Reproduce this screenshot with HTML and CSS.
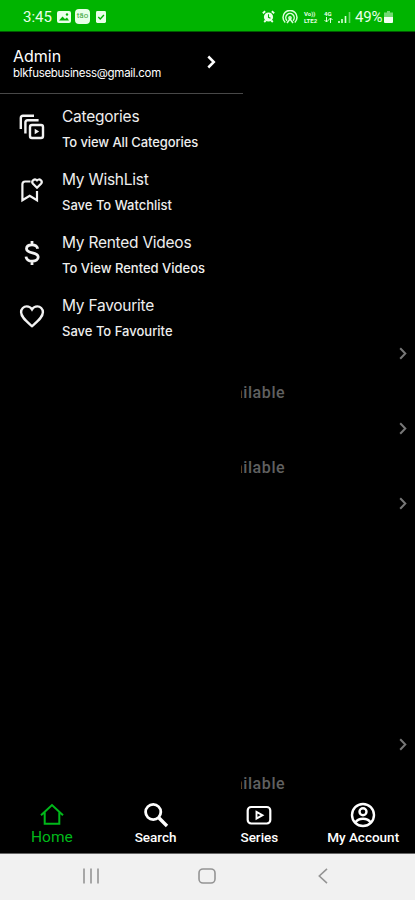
FILE: index.html
```
<!DOCTYPE html>
<html lang="en">
<head>
    <meta charset="UTF-8">
    <meta name="viewport" content="width=device-width, initial-scale=1.0">
    <title>Home</title>
    <link rel="stylesheet" href="styles.css">
</head>
<body>
    <div class="phone">
        <!-- status bar -->
        <header class="status">
            <div class="status-left">
                <span class="clock">3:45</span>
                <svg width="14" height="12" viewBox="0 0 14 12"><rect width="14" height="12" rx="2" fill="#e9ffe9"/><path d="M2 9.5l3.5-4 2.5 2.5 2-1.5 2 3z" fill="#00b400"/><circle cx="10" cy="3.5" r="1.2" fill="#00b400"/></svg>
                <span class="app-badge">tão</span>
                <svg width="10" height="12" viewBox="0 0 11 13"><rect width="11" height="13" rx="1.5" fill="#e9ffe9"/><path d="M2.5 6.5l2.2 2.2 4-4.4" fill="none" stroke="#00b400" stroke-width="1.5"/></svg>
            </div>
            <div class="status-right">
                <svg width="13" height="13" viewBox="0 0 13 13"><circle cx="6.5" cy="7" r="4.6" fill="#e9ffe9"/><path d="M.8 3.2l2.4-2M12.2 3.2l-2.4-2M2.2 12l1.5-1.5M10.8 12l-1.5-1.5" stroke="#e9ffe9" stroke-width="1.8"/><path d="M6.5 4.3v3l2 1" fill="none" stroke="#00b400" stroke-width="1.1"/></svg>
                <svg class="hotspot" width="16" height="14" viewBox="0 0 16 14" fill="none" stroke="#d9ffd9" stroke-width="1.5"><path d="M3.2 12.5A7 7 0 1 1 12.8 12.5M5 10.7A4.2 4.2 0 1 1 11 10.7"/><circle cx="8" cy="7.8" r="1.1"/><path d="M8 9l-3 4M8 9l3 4"/></svg>
                <span class="tiny"><span>Vo))</span><span>LTE2</span></span>
                <span class="tiny net"><span>4G</span><svg width="9" height="6" viewBox="0 0 9 6" fill="none" stroke="#d9ffd9"><path d="M2.5 0v5M.5 3l2 2 2-2M6.5 6V1M4.5 3l2-2 2 2"/></svg></span>
                <svg class="signal" width="13" height="12" viewBox="0 0 13 12"><path d="M1 12v-2M4 12V8M7.5 12V5" stroke="#d9ffd9" stroke-width="1.6"/><path d="M11.5 12V1" stroke="#6bd66b" stroke-width="1.6"/></svg>
                <span class="percent">49%</span>
                <svg width="9" height="12" viewBox="0 0 9 12"><path d="M3 0h3v1.5h3V6H0V1.5h3z" fill="#72d972"/><path d="M0 6h9v5q0 1-1 1H1q-1 0-1-1z" fill="#f3fff3"/></svg>
            </div>
        </header>

        <main class="screen">
            <!-- dimmed home page -->
            <section class="home">
                <div class="section-head"><svg width="8" height="13" viewBox="0 0 8 13"><path d="M1.2 1.2L6.3 6.5l-5.1 5.3"/></svg></div>
                <p class="empty">ailable</p>
                <div class="section-head"><svg width="8" height="13" viewBox="0 0 8 13"><path d="M1.2 1.2L6.3 6.5l-5.1 5.3"/></svg></div>
                <p class="empty">ailable</p>
                <div class="section-head"><svg width="8" height="13" viewBox="0 0 8 13"><path d="M1.2 1.2L6.3 6.5l-5.1 5.3"/></svg></div>
                <div class="section-head last"><svg width="8" height="13" viewBox="0 0 8 13"><path d="M1.2 1.2L6.3 6.5l-5.1 5.3"/></svg></div>
                <p class="empty">ailable</p>
            </section>

            <!-- drawer -->
            <aside class="drawer">
                <div class="profile">
                    <div>
                        <div class="name">Admin</div>
                        <div class="email">blkfusebusiness@gmail.com</div>
                    </div>
                    <svg class="profile-arrow" width="9" height="14" viewBox="0 0 9 14"><path d="M1.3 1.5L6.8 7l-5.5 5.5" fill="none" stroke="#fff" stroke-width="2.5"/></svg>
                </div>
                <nav class="menu">
                    <a class="item">
                        <svg width="26" height="26" viewBox="0 0 26 26" fill="none" stroke="#f2f2f2" stroke-width="2.4"><path d="M1.8 15V4q0-2.2 2.2-2.2h11M6.4 19.5V8.5q0-2.2 2.2-2.2h11"/><rect x="11" y="11" width="13" height="13" rx="2"/><path d="M15.7 14.7l4.5 2.8-4.5 2.8z" fill="#f2f2f2" stroke="none"/></svg>
                        <span class="label"><b>Categories</b><small class="plain">To view All Categories</small></span>
                    </a>
                    <a class="item">
                        <svg width="26" height="26" viewBox="0 0 26 26" fill="none" stroke="#f2f2f2" stroke-width="2.2"><path d="M11.5 4.5H6.2Q3.4 4.5 3.4 7.3v16l7.3-4.6 7.3 4.6V14"/><path d="M18 10.8l-4-4a2.3 2.3 0 0 1 4-3.4 2.3 2.3 0 0 1 4 3.4z"/></svg>
                        <span class="label"><b>My WishList</b><small>Save To Watchlist</small></span>
                    </a>
                    <a class="item">
                        <svg width="26" height="26" viewBox="0 0 26 26" fill="none" stroke="#f2f2f2" stroke-width="2.8"><path d="M13 1v4M13 21v4M18.7 8.8C18.2 6 16 4.8 13 4.8c-3.2 0-5.5 1.5-5.5 4 0 5.5 11.7 2.8 11.7 8.2 0 2.6-2.5 4.2-6 4.2-3.6 0-5.8-1.500-6.200-4.600"/></svg>
                        <span class="label"><b>My Rented Videos</b><small>To View Rented Videos</small></span>
                    </a>
                    <a class="item">
                        <svg width="26" height="26" viewBox="0 0 26 26" fill="none" stroke="#f2f2f2" stroke-width="2.4"><path d="M13 23.2C7.5 18.3 2.1 14.2 2.1 9.2c0-3.4 2.6-5.8 5.6-5.8 2.1 0 4.1 1.1 5.3 3 1.2-1.9 3.2-3 5.3-3 3 0 5.6 2.4 5.6 5.8 0 5-5.4 9.1-10.9 14z"/></svg>
                        <span class="label"><b>My Favourite</b><small>Save To Favourite</small></span>
                    </a>
                </nav>
            </aside>
        </main>

        <!-- tabs -->
        <nav class="tabs">
            <a class="tab active">
                <svg width="26" height="26" viewBox="0 0 26 26" fill="none" stroke="currentColor" stroke-width="2"><path d="M2 13.2L13 3l11 10.2M5.7 10.5v11.3h14.6V10.5"/></svg>
                <span>Home</span>
            </a>
            <a class="tab">
                <svg width="26" height="26" viewBox="0 0 26 26" fill="none" stroke="currentColor" stroke-width="2.8"><circle cx="10.2" cy="10" r="7.6"/><path d="M15.8 15.8l8.2 8.2" stroke-width="3.4"/></svg>
                <span>Search</span>
            </a>
            <a class="tab">
                <svg width="26" height="26" viewBox="0 0 26 26" fill="none" stroke="currentColor" stroke-width="2.2"><rect x="1.7" y="5" width="22.6" height="16.5" rx="3.5"/><path d="M10.5 9.8v6.8l6-3.4z" stroke-width="1.9"/></svg>
                <span>Series</span>
            </a>
            <a class="tab">
                <svg width="26" height="26" viewBox="0 0 26 26" fill="none" stroke="currentColor" stroke-width="2.4"><circle cx="13" cy="13" r="11"/><circle cx="13" cy="9.7" r="3.5"/><path d="M5.5 20.2q2.4-3.5 7.5-3.5t7.5 3.5"/></svg>
                <span>My Account</span>
            </a>
        </nav>

        <!-- system buttons -->
        <footer class="system">
            <svg width="16" height="16" viewBox="0 0 16 16" fill="none" stroke="#9b9b9b" stroke-width="1.7"><path d="M1 .5v15M8 .5v15M15 .5v15"/></svg>
            <svg class="home-key" width="18" height="16" viewBox="0 0 18 16" fill="none" stroke="#949494" stroke-width="1.6"><rect x="1" y="1" width="16" height="14" rx="4"/></svg>
            <svg width="10" height="16" viewBox="0 0 10 16" fill="none" stroke="#949494" stroke-width="1.6"><path d="M9 .8L1.3 8 9 15.2"/></svg>
        </footer>
    </div>
</body>
</html>
```
FILE: styles.css
```
* {
    box-sizing: border-box;
}
body {
    margin: 0;
    background-color: #000;
    font-family: Roboto, sans-serif;
    color: #fff;
}
svg {
    display: block;
    flex-shrink: 0;
}
.phone {
    display: flex;
    flex-direction: column;
    width: 415px;
    height: 900px;
    overflow: hidden;
}

/* status bar */
.status {
    display: flex;
    justify-content: space-between;
    align-items: center;
    height: 33px;
    padding: 3px 22px 0 23px;
    background-color: #00b400;
    border-bottom: 1px solid #005a00;
    color: #e9ffe9;
}
.status-left, .status-right {
    display: flex;
    align-items: center;
}
.clock {
    width: 34px;
    font-size: 15px;
}
.app-badge {
    width: 15px;
    height: 15px;
    margin: 0 6px 0 4px;
    border-radius: 4px;
    background-color: #e9ffe9;
    color: #3aa53a;
    font-size: 8px;
    line-height: 14px;
    text-align: center;
}
.hotspot {
    margin-left: 7px;
}
.tiny {
    display: flex;
    flex-direction: column;
    width: 16px;
    margin-left: 6px;
    font-size: 6px;
    line-height: 7px;
    font-weight: 700;
}
.net {
    width: 10px;
    margin-left: 4px;
}
.signal {
    margin-left: 4px;
}
.percent {
    width: 28px;
    margin: 0 1px 0 4px;
    font-size: 15px;
    letter-spacing: -0.2px;
}

/* home page behind the drawer */
.screen {
    position: relative;
    flex: 1;
}
.home {
    padding-top: 303px;
}
.section-head {
    display: flex;
    justify-content: flex-end;
    align-items: center;
    height: 37px;
    padding-right: 8px;
}
.section-head svg {
    fill: none;
    stroke: #777;
    stroke-width: 2;
}
.empty {
    height: 38px;
    margin: 0;
    padding-left: 234px;
    font-size: 16px;
    line-height: 42px;
    font-weight: 500;
    letter-spacing: 0.6px;
    color: #606060;
}
.last {
    margin-top: 204px;
}

/* drawer */
.drawer {
    position: absolute;
    top: 0;
    left: 0;
    width: 241px;
    height: 100%;
    background-color: #000;
    font-family: Inter, sans-serif;
}
.profile {
    display: flex;
    justify-content: space-between;
    width: 243px;
    height: 62px;
    padding: 14px 27px 0 13px;
    border-bottom: 1px solid #484848;
}
.name {
    padding-top: 1px;
    font-size: 16px;
    line-height: 19px;
}
.email {
    font-size: 11.5px;
    line-height: 15px;
    letter-spacing: -0.3px;
}
.profile-arrow {
    margin-top: 9px;
}
.menu {
    padding-top: 8px;
}
.item {
    display: flex;
    align-items: center;
    gap: 17px;
    height: 63.2px;
    padding-left: 19px;
    color: #eee;
}
.item svg {
    margin-bottom: 13px;
}
.label {
    display: flex;
    flex-direction: column;
    height: 63px;
    white-space: nowrap;
}
.label b {
    padding-top: 3px;
    font-size: 15.5px;
    line-height: 24px;
    font-weight: 400;
    letter-spacing: -0.25px;
}
.label small {
    font-size: 13px;
    line-height: 26px;
    font-weight: 500;
}
.label .plain {
    letter-spacing: -0.1px;
}

/* tabs */
.tabs {
    display: grid;
    grid-template-columns: repeat(4, 1fr);
    height: 56px;
    padding-top: 1px;
    background-color: #000;
    border-bottom: 1px solid #666;
}
.tab {
    display: flex;
    flex-direction: column;
    align-items: center;
    font-size: 13.5px;
    line-height: 18px;
    font-weight: 500;
}
.active {
    color: #00b81a;
    font-size: 15.5px;
    font-weight: 400;
}

/* android nav keys */
.system {
    display: flex;
    align-items: center;
    justify-content: space-between;
    height: 48px;
    padding: 0 87px 3px 83px;
    background-color: #f1f1f1;
}
.home-key {
    margin-right: 4px;
}
```
